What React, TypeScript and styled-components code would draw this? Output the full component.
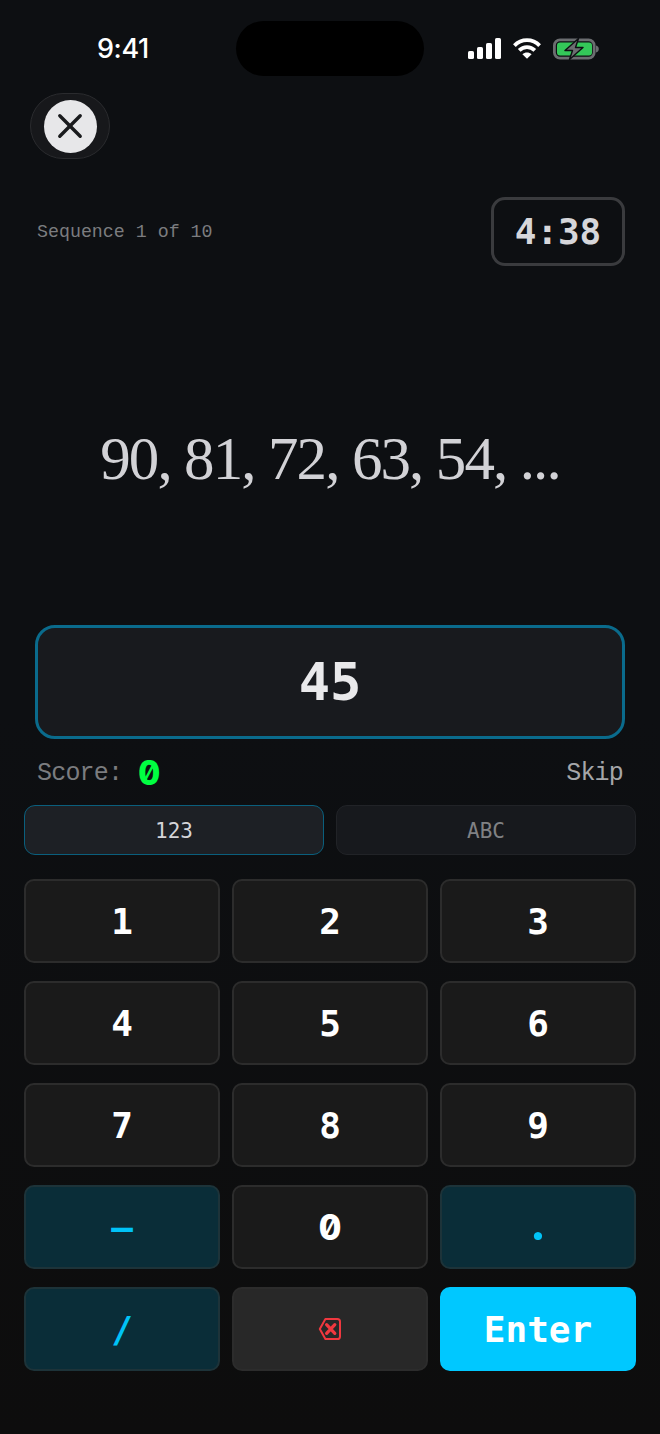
import React from 'react';
import styled, { createGlobalStyle } from 'styled-components';

const MONO = '"DejaVu Sans Mono", "Liberation Mono", monospace';
const THIN_MONO = '"Liberation Mono", "DejaVu Sans Mono", monospace';

type KeyTone = 'plain' | 'accent' | 'danger' | 'enter';

const KEY_ROWS: { label: string; tone: KeyTone }[][] = [
  [
    { label: '1', tone: 'plain' },
    { label: '2', tone: 'plain' },
    { label: '3', tone: 'plain' },
  ],
  [
    { label: '4', tone: 'plain' },
    { label: '5', tone: 'plain' },
    { label: '6', tone: 'plain' },
  ],
  [
    { label: '7', tone: 'plain' },
    { label: '8', tone: 'plain' },
    { label: '9', tone: 'plain' },
  ],
  [
    { label: '–', tone: 'accent' },
    { label: '0', tone: 'plain' },
    { label: '.', tone: 'accent' },
  ],
  [
    { label: '/', tone: 'accent' },
    { label: '', tone: 'danger' },
    { label: 'Enter', tone: 'enter' },
  ],
];

const SignalIcon = () => (
  <svg width="33" height="21" viewBox="0 0 33 21" fill="#fff">
    <rect x="0" y="13" width="6" height="8" rx="1.6" />
    <rect x="9" y="9" width="6" height="12" rx="1.6" />
    <rect x="18" y="5" width="6" height="16" rx="1.6" />
    <rect x="27" y="0" width="6" height="21" rx="1.6" />
  </svg>
);

const WifiIcon = () => (
  <svg width="28" height="21" viewBox="0 0 28 21" fill="none" stroke="#fff" strokeWidth="3.8">
    <path d="M1.4 7.6C8.4 0.4 19.6 0.4 26.6 7.6" />
    <path d="M6.2 12.4C10.6 7.9 17.4 7.9 21.8 12.4" />
    <path d="M14 20.8L9.4 16.2C12 13.9 16 13.9 18.6 16.2Z" fill="#fff" stroke="none" />
  </svg>
);

const BatteryIcon = () => (
  <svg width="46" height="22" viewBox="0 0 46 22">
    <rect x="1.4" y="1.9" width="39.8" height="18.2" rx="5.6" fill="none" stroke="#6b6d70" strokeWidth="2.8" />
    <rect x="4" y="4.4" width="35" height="13.2" rx="3" fill="#34c759" />
    <path d="M43 7.6c1.8.4 2.8 1.7 2.8 3.4s-1 3-2.8 3.4z" fill="#6b6d70" />
    <path
      d="M25.5 0.5L12 12.5H19.5L16.5 21.5L30 9.5H22.5Z"
      fill="#6b6d70"
      stroke="#0d0f12"
      strokeWidth="1.4"
      strokeLinejoin="round"
    />
  </svg>
);

const CloseIcon = () => (
  <svg width="26" height="26" viewBox="0 0 26 26" fill="none" stroke="#1a1b1d" strokeWidth="3.4" strokeLinecap="round">
    <path d="M2.8 2.8L23.2 23.2" />
    <path d="M23.2 2.8L2.8 23.2" />
  </svg>
);

const BackspaceIcon = () => (
  <svg width="24" height="24" viewBox="0 0 24 24" fill="none" stroke="#f0383f">
    <path
      d="M7.4 2H19.4C21 2 22 3 22 4.6V19.4C22 21 21 22 19.4 22H7.4L1.8 12Z"
      strokeWidth="2"
      strokeLinejoin="round"
    />
    <path d="M8.6 7.6L16.8 16.4M16.8 7.6L8.6 16.4" strokeWidth="3.2" strokeLinecap="round" />
  </svg>
);

const App = () => {
  return (
    <Screen>
      <GlobalStyle />
      <StatusBar>
        <Clock>9:41</Clock>
        <Island />
        <StatusIcons>
          <SignalIcon />
          <WifiIcon />
          <BatteryIcon />
        </StatusIcons>
      </StatusBar>

      <CloseShell>
        <CloseDisc>
          <CloseIcon />
        </CloseDisc>
      </CloseShell>

      <MetaRow>
        <SequenceLabel>Sequence 1 of 10</SequenceLabel>
        <Timer>4:38</Timer>
      </MetaRow>

      <Problem>90, 81, 72, 63, 54, ...</Problem>

      <AnswerBox>45</AnswerBox>

      <ScoreRow>
        <ScoreLabel>
          Score:
          <ScoreValue>0</ScoreValue>
        </ScoreLabel>
        <SkipLabel>Skip</SkipLabel>
      </ScoreRow>

      <Tabs>
        <Tab active>123</Tab>
        <Tab active={false}>ABC</Tab>
      </Tabs>

      <Keypad>
        {KEY_ROWS.flat().map((key, i) => (
          <Key key={i} tone={key.tone}>
            {key.tone === 'danger' ? (
              <BackspaceIcon />
            ) : key.label === '0' ? (
              <ZeroGlyph>0</ZeroGlyph>
            ) : key.label === '.' ? (
              <DotGlyph>.</DotGlyph>
            ) : (
              key.label
            )}
          </Key>
        ))}
      </Keypad>
    </Screen>
  );
};

export default App;

const GlobalStyle = createGlobalStyle`
  html, body {
    margin: 0;
    padding: 0;
    background: #0d0d0d;
  }
  * {
    box-sizing: border-box;
  }
`;

const Screen = styled.div`
  width: 660px;
  height: 1434px;
  overflow: hidden;
  background: linear-gradient(180deg, #0d0f12 0%, #0d0f12 50%, #0d0d0d 100%);
  font-family: ${MONO};
`;

const StatusBar = styled.div`
  display: grid;
  grid-template-columns: 236px 188px 236px;
  height: 93px;
  padding-top: 21px;
`;

const Clock = styled.div`
  height: 55px;
  padding-left: 97px;
  font-family: Inter, sans-serif;
  font-size: 27px;
  font-weight: 500;
  line-height: 56px;
  letter-spacing: -0.4px;
  color: #fff;
`;

const Island = styled.div`
  height: 55px;
  border-radius: 28px;
  background: #000;
`;

const StatusIcons = styled.div`
  display: flex;
  align-items: center;
  height: 55px;
  padding-left: 44px;
  gap: 12px;
`;

const CloseShell = styled.div`
  display: flex;
  align-items: center;
  justify-content: center;
  width: 80px;
  height: 66px;
  margin-left: 30px;
  border: 1px solid #2a2b2e;
  border-radius: 33px;
  background: #17181b;
`;

const CloseDisc = styled.div`
  display: flex;
  align-items: center;
  justify-content: center;
  width: 53px;
  height: 53px;
  border-radius: 50%;
  background: #e7e7e9;
`;

const MetaRow = styled.div`
  display: flex;
  align-items: center;
  justify-content: space-between;
  margin-top: 38px;
  padding: 0 35px 0 37px;
`;

const SequenceLabel = styled.div`
  font-family: ${THIN_MONO};
  font-size: 18.3px;
  color: #7b7c7f;
`;

const Timer = styled.div`
  display: flex;
  align-items: center;
  justify-content: center;
  width: 134px;
  height: 69px;
  border: 3px solid #3a3b3e;
  border-radius: 14px;
  font-size: 36px;
  font-weight: 700;
  letter-spacing: -0.1px;
  color: #d6d6da;
`;

const Problem = styled.div`
  display: flex;
  align-items: center;
  justify-content: center;
  height: 359px;
  padding-top: 26px;
  font-family: 'Liberation Serif', serif;
  font-size: 61px;
  letter-spacing: -1.9px;
  color: #d2d2d6;
`;

const AnswerBox = styled.div`
  display: flex;
  align-items: center;
  justify-content: center;
  width: 590px;
  height: 114px;
  margin-left: 35px;
  border: 3px solid #0a6b8c;
  border-radius: 20px;
  background: #181a1e;
  font-size: 52px;
  font-weight: 700;
  color: #e9e9eb;
`;

const ScoreRow = styled.div`
  display: flex;
  align-items: center;
  justify-content: space-between;
  height: 66px;
  padding: 2px 37px 0 37px;
`;

const ScoreLabel = styled.div`
  display: flex;
  align-items: center;
  gap: 16px;
  font-family: ${THIN_MONO};
  font-size: 25px;
  letter-spacing: -0.8px;
  color: #7b7c7f;
`;

const ScoreValue = styled.span`
  font-family: Inter, sans-serif;
  font-feature-settings: 'zero', 'tnum';
  font-size: 34px;
  font-weight: 800;
  line-height: 34px;
  color: #00ff41;
`;

const SkipLabel = styled.div`
  font-family: ${THIN_MONO};
  font-size: 25px;
  letter-spacing: -0.8px;
  color: #a5a6a9;
`;

const Tabs = styled.div`
  display: grid;
  grid-template-columns: 1fr 1fr;
  gap: 12px;
  padding: 0 24px;
`;

const Tab = styled.div<{ active: boolean }>`
  display: flex;
  align-items: center;
  justify-content: center;
  height: 50px;
  padding-top: 1px;
  border: 1.5px solid ${(props) => (props.active ? '#0a5f7d' : '#212327')};
  border-radius: 11px;
  background: ${(props) => (props.active ? '#1d2025' : '#17191d')};
  font-size: 21px;
  color: ${(props) => (props.active ? '#d4d4d8' : '#808184')};
`;

const KEY_BG: Record<KeyTone, string> = {
  plain: '#1a1a1a',
  accent: '#0a2d38',
  danger: '#282828',
  enter: '#00c8ff',
};

const KEY_COLOR: Record<KeyTone, string> = {
  plain: '#ffffff',
  accent: '#00c3f7',
  danger: '#f0383f',
  enter: '#ffffff',
};

const Keypad = styled.div`
  display: grid;
  grid-template-columns: repeat(3, 196px);
  grid-auto-rows: 84px;
  column-gap: 12px;
  row-gap: 18px;
  margin-top: 24px;
  padding: 0 24px;
`;

const Key = styled.div<{ tone: KeyTone }>`
  display: flex;
  align-items: center;
  justify-content: center;
  border: 2px solid ${(props) => (props.tone === 'enter' ? '#00c8ff' : props.tone === 'accent' ? '#1d3339' : '#2c2c2c')};
  border-radius: 10px;
  background: ${(props) => KEY_BG[props.tone]};
  font-size: 36px;
  font-weight: 700;
  color: ${(props) => KEY_COLOR[props.tone]};
`;

const ZeroGlyph = styled.span`
  font-family: Inter, sans-serif;
  font-feature-settings: 'zero', 'tnum';
  font-size: 35px;
  font-weight: 800;
`;

const DotGlyph = styled.span`
  margin-bottom: 12px;
  font-family: Lato, sans-serif;
  font-size: 50px;
  font-weight: 900;
  line-height: 50px;
`;
